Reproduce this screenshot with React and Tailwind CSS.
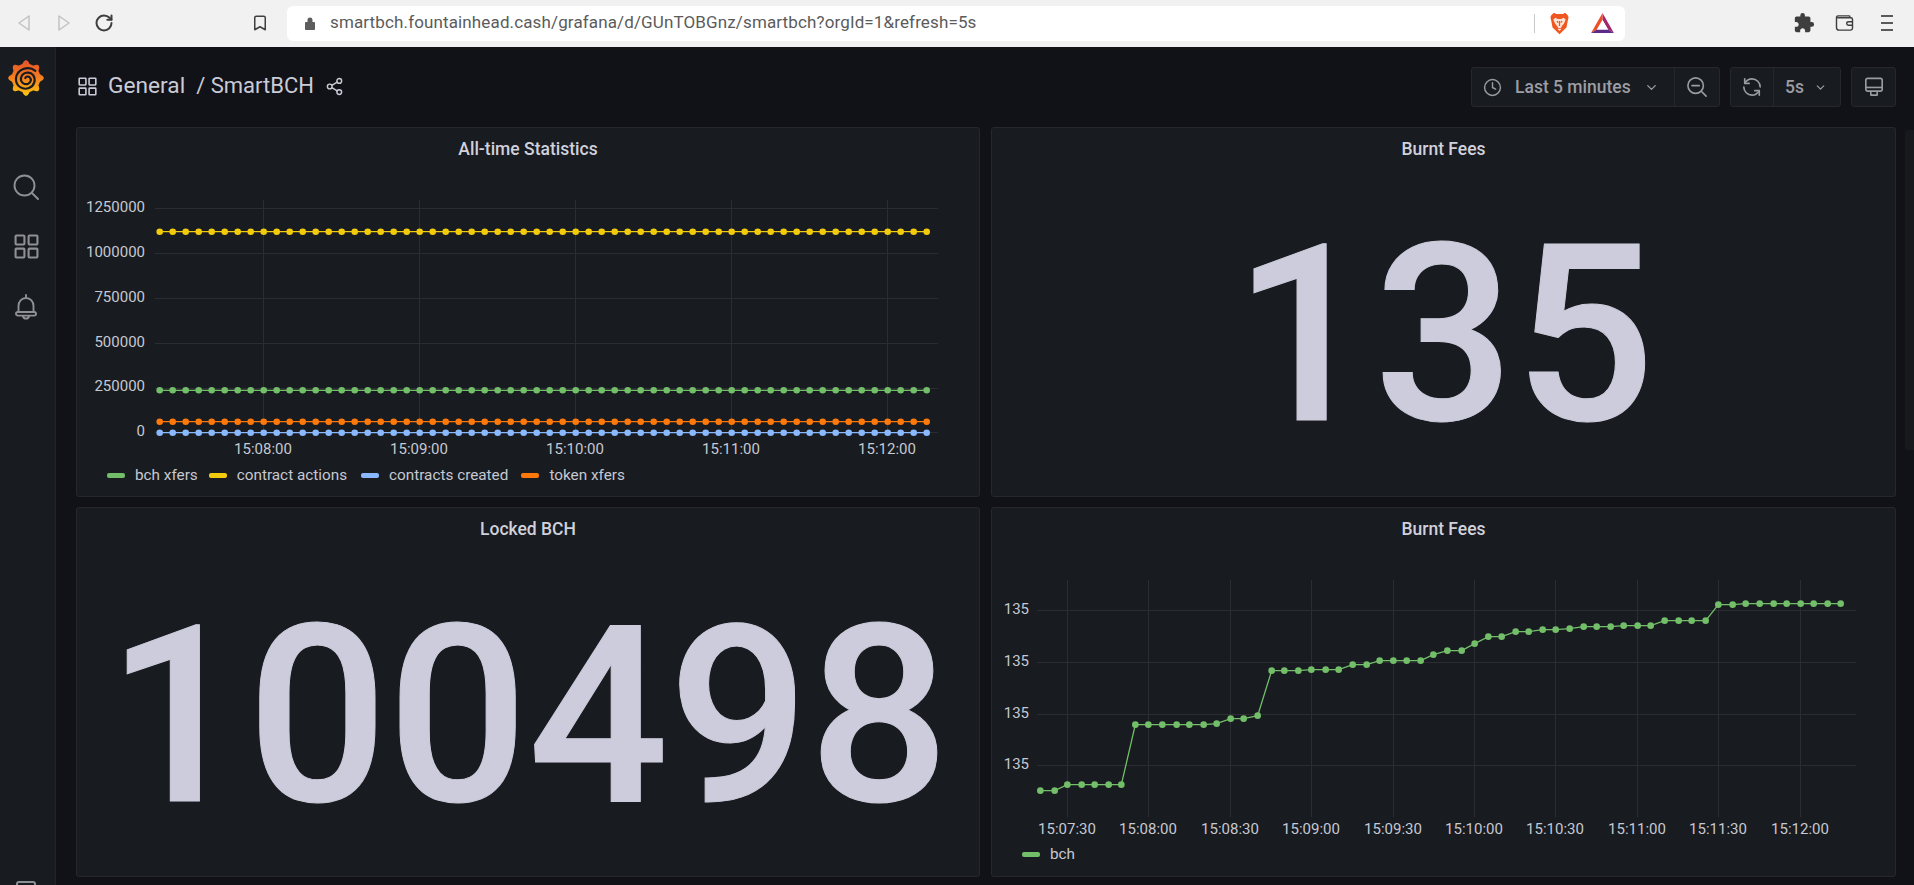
import React from "react";
import { Bookmark, ChevronDown, Clock, RotateCw, Share2 } from "lucide-react";
import { MdExtension } from "react-icons/md";

const range = (n) => Array.from({ length: n }, (_, i) => i);

const AXIS = "#c6c8d2";
const GRID = "#2b2d33";

function Grid4({ className }) {
  return (
    <svg viewBox="0 0 24 24" className={className} fill="none" stroke="currentColor" strokeWidth="2">
      <rect x="1.5" y="1.5" width="8.5" height="8.5" rx="0.8" />
      <rect x="14" y="1.5" width="8.5" height="8.5" rx="0.8" />
      <rect x="1.5" y="14" width="8.5" height="8.5" rx="0.8" />
      <rect x="14" y="14" width="8.5" height="8.5" rx="0.8" />
    </svg>
  );
}

function GrafanaLogo() {
  const cx = 25;
  const cy = 25;
  const teeth = 8;
  let d = "";
  for (let i = 0; i <= 160; i++) {
    const a = (i / 160) * Math.PI * 2 - Math.PI / 2;
    const t = Math.cos(a * teeth);
    const r = 21.5 + 3.2 * Math.max(-0.5, t);
    d += `${i === 0 ? "M" : "L"}${(cx + r * Math.cos(a)).toFixed(2)} ${(cy + r * Math.sin(a)).toFixed(2)}`;
  }
  return (
    <svg viewBox="0 0 50 50" className="h-[36px] w-[36px]">
      <defs>
        <linearGradient id="gf" x1="0" y1="0" x2="0" y2="1">
          <stop offset="0" stopColor="#e8522a" />
          <stop offset="0.45" stopColor="#f27a20" />
          <stop offset="1" stopColor="#fbc611" />
        </linearGradient>
      </defs>
      <path d={d + "Z"} fill="url(#gf)" />
      <path d="M38 15 C28 7 12 13 11 26 C11 37 21 42 29 39 C37 36 39 27 35 21 C30 15 20 17 18 25 C17 31 23 35 28 33 C32 31 33 27 30 24 C28 22 25 23 24 25" fill="none" stroke="#181b1f" strokeWidth="3" strokeLinecap="round" />
    </svg>
  );
}

function BraveLion() {
  return (
    <svg viewBox="0 0 24 28" className="h-[23px] w-[21px]">
      <path d="M5 1 L8 2.5 H16 L19 1 L22.5 4.5 L23 7 L22 11 L20.5 19 L12 27 L3.5 19 L2 11 L1 7 L1.5 4.5 Z" fill="#f0561f" />
      <path d="M7 7 L10 8.5 H14 L17 7 L19.5 9 L17.5 14 L15 17 L13.5 19.5 H10.5 L9 17 L6.5 14 L4.5 9 Z" fill="#fbe3d6" />
      <path d="M9.5 20.5 H14.5 L12 23 Z" fill="#fbe3d6" />
      <path d="M12 11 V17 M9 11 L10.5 13 M15 11 L13.5 13" stroke="#f0561f" strokeWidth="1.5" fill="none" />
    </svg>
  );
}

function BatTriangle() {
  return (
    <svg viewBox="0 0 24 21" className="h-[20px] w-[23px]">
      <path d="M12 0 L24 21 L17.8 17.4 L12 7.4 Z" fill="#a3276f" />
      <path d="M12 0 L12 7.4 L6.2 17.4 L0 21 Z" fill="#ef4f26" />
      <path d="M0 21 L6.2 17.4 H17.8 L24 21 Z" fill="#5c2a86" />
      <path d="M12 7.4 L17.8 17.4 H6.2 Z" fill="#ffffff" />
    </svg>
  );
}

function Wallet() {
  return (
    <svg viewBox="0 0 20 18" className="h-[16px] w-[19px]" fill="none" stroke="#3e3e3e" strokeWidth="1.6">
      <path d="M16 3 V1.8 C16 1.3 15.6 1 15 1 H3 C1.8 1 1 1.9 1 3 V14 C1 15.7 2.2 17 4 17 H17 C18.1 17 19 16.1 19 15 V5 C19 3.9 18.1 3 17 3 H2" />
      <path d="M19 7.5 H14.5 C13.3 7.5 12.5 8.3 12.5 9.5 C12.5 10.7 13.3 11.5 14.5 11.5 H19" />
    </svg>
  );
}

function SearchIcon() {
  return (
    <svg viewBox="0 0 26 26" className="h-[26px] w-[26px]" fill="none" stroke="#8f9096" strokeWidth="1.9" strokeLinecap="round">
      <circle cx="11.5" cy="11.5" r="10" />
      <path d="M19 19 L25 25" />
    </svg>
  );
}

function BellIcon() {
  return (
    <svg viewBox="0 0 22 26" className="h-[26px] w-[22px]" fill="none" stroke="#8f9096" strokeWidth="1.9" strokeLinecap="round">
      <path d="M11 1 V4 M3.5 18 V12 C3.5 7.5 6.5 4 11 4 C15.5 4 18.5 7.5 18.5 12 V18" />
      <rect x="1" y="18" width="20" height="3.6" rx="1.8" />
      <path d="M8 22 C8.5 25.5 13.5 25.5 14 22" />
    </svg>
  );
}

function ZoomOutIcon() {
  return (
    <svg viewBox="0 0 22 22" className="h-[20px] w-[20px]" fill="none" stroke="#9a9ba3" strokeWidth="1.8" strokeLinecap="round">
      <circle cx="9.5" cy="9.5" r="8.5" />
      <path d="M5.5 9.5 H13.5 M16 16 L21 21" />
    </svg>
  );
}

function SyncIcon() {
  return (
    <svg viewBox="0 0 22 22" className="h-[20px] w-[20px]" fill="none" stroke="#9a9ba3" strokeWidth="1.8" strokeLinecap="round" strokeLinejoin="round">
      <path d="M3 7 C5 3.5 8 2 11 2 C16 2 20 6 20 11" />
      <path d="M3 2 V7 H8" />
      <path d="M19 15 C17 18.5 14 20 11 20 C6 20 2 16 2 11" />
      <path d="M19 20 V15 H14" />
    </svg>
  );
}

function MonitorIcon() {
  return (
    <svg viewBox="0 0 22 22" className="h-[20px] w-[20px]" fill="none" stroke="#9a9ba3" strokeWidth="1.8">
      <rect x="2" y="1.5" width="18" height="14" rx="2" />
      <path d="M2 11.5 H20" />
      <path d="M7 20 H15 M7.5 15.5 V20 M14.5 15.5 V20" />
    </svg>
  );
}

function TimeSeries({ x, y, w, h, hLines, vLines, yLabels, xLabels, series, r, lw }) {
  return (
    <svg viewBox={`${x} ${y} ${w} ${h}`} width={w} height={h} className="block shrink-0">
      {hLines.lines.map((v) => (
        <line key={v} x1={hLines.from} x2={hLines.to} y1={v} y2={v} stroke={GRID} strokeWidth="1" />
      ))}
      {vLines.lines.map((v) => (
        <line key={v} x1={v} x2={v} y1={vLines.from} y2={vLines.to} stroke={GRID} strokeWidth="1" />
      ))}
      {yLabels.map((l, i) => (
        <text key={i} x={l.x} y={l.y + 5} textAnchor="end" fontSize="15" fill={AXIS} fontFamily="Roboto, sans-serif">{l.t}</text>
      ))}
      {xLabels.map((l) => (
        <text key={l.t} x={l.x} y={l.y + 5} textAnchor="middle" fontSize="15" fill={AXIS} fontFamily="Roboto, sans-serif">{l.t}</text>
      ))}
      {series.map((s, i) => (
        <g key={i}>
          <polyline points={s.pts.map((p) => p.join(",")).join(" ")} fill="none" stroke={s.color} strokeWidth={lw} />
          {s.pts.map((p, j) => (
            <circle key={j} cx={p[0]} cy={p[1]} r={r} fill={s.color} />
          ))}
        </g>
      ))}
    </svg>
  );
}

function Legend({ items }) {
  return (
    <div className="flex h-[28px] items-center pl-[30px] text-[15.3px] text-[#c6c8d2]">
      {items.map((it) => (
        <div key={it.t} className={`flex items-center ${it.mr}`}>
          <span className={`mr-[10px] h-[5px] w-[18px] rounded-[2px] ${it.bg}`} />
          <span>{it.t}</span>
        </div>
      ))}
    </div>
  );
}

function Panel({ title, children }) {
  return (
    <div className="flex min-h-0 flex-col overflow-hidden rounded-[3px] border border-[#25272d] bg-[#181b1f]">
      <div className="flex h-[41px] shrink-0 items-center justify-center pt-[2px] text-[17.5px] font-medium text-[#d0d1dc]">{title}</div>
      {children}
    </div>
  );
}

function BigStat({ value, size }) {
  return (
    <div className="flex flex-1 items-center justify-center">
      <span className={`font-medium leading-none text-[#ccccdc] [-webkit-text-stroke:1px_#ccccdc] ${size}`}>{value}</span>
    </div>
  );
}

const line = (y, color) => ({
  color,
  pts: range(60).map((i) => [159.7 + i * 13, y]),
});

const zoomA = [[181,872],[224,872],[262,854],[305,854],[344,854],[386,854],[424,854],[466,674],[505,674],[547,674],[590,674],[628,674],[671,674],[710,671],[752,656],[791,656],[833,647],[875,512],[913,512],[955,512],[994,509],[1037,509],[1076,509],[1118,494],[1160,494],[1199,482],[1240,482],[1280,482],[1322,482],[1360,464],[1402,452],[1445,452],[1484,431]];
const zoomB = [[115,410],[155,410],[197,395],[236,395],[278,389],[317,389],[359,386],[401,380],[440,380],[482,380],[521,377],[563,377],[602,377],[644,362],[686,362],[725,362],[767,362],[805,314],[848,314],[887,311],[929,311],[971,311],[1010,311],[1052,311],[1091,311],[1133,311],[1172,311]];
const feesPts = [
  ...zoomA.map(([a, b]) => [980 + a / 3, 500 + b / 3]),
  ...zoomB.map(([a, b]) => [1450 + a / 3, 500 + b / 3]),
];

export default function App() {
  return (
    <div className="relative flex h-[885px] w-[1914px] flex-col overflow-hidden bg-[#111217] font-['Roboto',sans-serif]">
      <div className="flex h-[47px] shrink-0 items-center bg-[#f1f1f1] pb-[1px]">
        <div className="ml-[18px] flex items-center">
          <svg viewBox="0 0 12 16" className="h-[16px] w-[12px]" fill="none" stroke="#c2c2c2" strokeWidth="1.5"><path d="M11 1 L1 8 L11 15 Z" strokeLinejoin="round" /></svg>
          <svg viewBox="0 0 12 16" className="ml-[28px] h-[16px] w-[12px]" fill="none" stroke="#c2c2c2" strokeWidth="1.5"><path d="M1 1 L11 8 L1 15 Z" strokeLinejoin="round" /></svg>
          <RotateCw className="ml-[24px] h-[20px] w-[20px] text-[#3f3f3f]" strokeWidth={2.4} />
          <Bookmark className="ml-[137px] h-[20px] w-[18px] text-[#3f3f3f]" strokeWidth={2} />
        </div>
        <div className="ml-[18px] flex h-[35px] w-[1338px] items-center rounded-[6px] bg-white">
          <svg viewBox="0 0 10 14" className="ml-[18px] h-[14px] w-[10px]" fill="#5d5d5d"><path d="M2.5 6 V4 C2.5 0.7 7.5 0.7 7.5 4 V6 H9 C9.6 6 10 6.4 10 7 V13 C10 13.6 9.6 14 9 14 H1 C0.4 14 0 13.6 0 13 V7 C0 6.4 0.4 6 1 6 Z" /></svg>
          <span className="ml-[15px] flex-1 text-[17px] tracking-[0.13px] text-[#5b5b5b]">smartbch.fountainhead.cash/grafana/d/GUnTOBGnz/smartbch?orgId=1&amp;refresh=5s</span>
          <span className="h-[19px] w-[1px] bg-[#c9c9c9]" />
          <span className="ml-[14px]"><BraveLion /></span>
          <span className="ml-[21px] mr-[11px]"><BatTriangle /></span>
        </div>
        <MdExtension className="ml-[168px] h-[22px] w-[22px] text-[#3e3e3e]" />
        <span className="ml-[20px]"><Wallet /></span>
        <div className="ml-[27px] flex h-[16px] w-[12px] flex-col justify-between">
          <span className="h-[2px] bg-[#5a5a5a]" />
          <span className="h-[2px] bg-[#5a5a5a]" />
          <span className="h-[2px] bg-[#5a5a5a]" />
        </div>
      </div>

      <div className="flex min-h-0 flex-1">
        <div className="flex w-[56px] shrink-0 flex-col items-center border-r border-[#202328] bg-[#181b1f] pr-[3px]">
          <div className="mt-[13px] h-[36px]"><GrafanaLogo /></div>
          <div className="mt-[78px]"><SearchIcon /></div>
          <div className="mt-[34px] text-[#8f9096]"><Grid4 className="h-[25px] w-[25px]" /></div>
          <div className="mt-[35px]"><BellIcon /></div>
          <div className="mt-[561px] h-[16px] w-[20px] shrink-0 rounded-[3px] border-2 border-[#8f9096]" />
        </div>

        <div className="min-w-0 flex-1 pl-[20px]">
          <div className="flex h-[80px] items-start">
            <div className="flex items-center pt-[29px] text-[#c9cbd6]">
              <Grid4 className="ml-[2px] h-[19px] w-[19px]" />
              <span className="ml-[11px] text-[22.7px] leading-[20px]">General</span>
              <span className="ml-[11px] text-[22px] leading-[20px]">/ SmartBCH</span>
              <Share2 className="ml-[11px] h-[19px] w-[19px]" strokeWidth={1.8} />
            </div>
            <div className="ml-auto mr-[18px] mt-[20px] flex h-[40px] items-stretch">
              <div className="flex w-[249px] rounded-[3px] border border-[#25272d] bg-[#181b1f]">
                <div className="flex flex-1 items-center border-r border-[#25272d] pl-[11px]">
                  <Clock className="h-[19px] w-[19px] text-[#9a9ba3]" strokeWidth={1.8} />
                  <span className="ml-[13px] text-[17.5px] font-medium text-[#9c9da5]">Last 5 minutes</span>
                  <ChevronDown className="ml-[13px] h-[15px] w-[15px] text-[#9a9ba3]" strokeWidth={2.2} />
                </div>
                <div className="flex w-[44px] items-center justify-center"><ZoomOutIcon /></div>
              </div>
              <div className="ml-[10px] flex w-[111px] rounded-[3px] border border-[#25272d] bg-[#181b1f]">
                <div className="flex w-[43px] items-center justify-center border-r border-[#25272d]"><SyncIcon /></div>
                <div className="flex flex-1 items-center pl-[11px]">
                  <span className="text-[17.5px] font-medium text-[#9c9da5]">5s</span>
                  <ChevronDown className="ml-[10px] h-[13px] w-[13px] text-[#9a9ba3]" strokeWidth={2.2} />
                </div>
              </div>
              <div className="ml-[10px] flex w-[45px] items-center justify-center rounded-[3px] border border-[#25272d] bg-[#181b1f]"><MonitorIcon /></div>
            </div>
          </div>

          <div className="grid grid-cols-[904px_905px] grid-rows-[370px_370px] gap-x-[11px] gap-y-[10px]">
            <Panel title="All-time Statistics">
              <TimeSeries
                x={77} y={169} w={902} h={292} r={3.3} lw={1.3}
                hLines={{ from: 155, to: 938, lines: [208.5, 253.5, 298.5, 343.5, 388.5, 432.5] }}
                vLines={{ from: 200, to: 432, lines: [263.5, 419.5, 575.5, 731.5, 887.5] }}
                yLabels={[
                  { t: "1250000", x: 145, y: 207 },
                  { t: "1000000", x: 145, y: 252 },
                  { t: "750000", x: 145, y: 297 },
                  { t: "500000", x: 145, y: 342 },
                  { t: "250000", x: 145, y: 386 },
                  { t: "0", x: 145, y: 431 },
                ]}
                xLabels={[
                  { t: "15:08:00", x: 263, y: 449 },
                  { t: "15:09:00", x: 419, y: 449 },
                  { t: "15:10:00", x: 575, y: 449 },
                  { t: "15:11:00", x: 731, y: 449 },
                  { t: "15:12:00", x: 887, y: 449 },
                ]}
                series={[line(390.3, "#73bf69"), line(231.7, "#f2cc0c"), line(421.7, "#ff780a"), line(432.7, "#8ab8ff")]}
              />
              <Legend items={[
                { t: "bch xfers", bg: "bg-[#73bf69]", mr: "mr-[11px]" },
                { t: "contract actions", bg: "bg-[#f2cc0c]", mr: "mr-[14px]" },
                { t: "contracts created", bg: "bg-[#8ab8ff]", mr: "mr-[13px]" },
                { t: "token xfers", bg: "bg-[#ff780a]", mr: "" },
              ]} />
            </Panel>
            <Panel title="Burnt Fees">
              <BigStat value="135" size="text-[247px] mt-[5px] pl-[1px]" />
            </Panel>
            <Panel title="Locked BCH">
              <BigStat value="100498" size="text-[247px] mt-[7px]" />
            </Panel>
            <Panel title="Burnt Fees">
              <TimeSeries
                x={992} y={549} w={903} h={291} r={3.3} lw={1.3}
                hLines={{ from: 1037, to: 1856, lines: [610.5, 662.5, 714.5, 765.5] }}
                vLines={{ from: 580, to: 817, lines: [1067.5, 1148.5, 1230.5, 1311.5, 1393.5, 1474.5, 1555.5, 1637.5, 1718.5, 1800.5] }}
                yLabels={[
                  { t: "135", x: 1029, y: 609 },
                  { t: "135", x: 1029, y: 661 },
                  { t: "135", x: 1029, y: 713 },
                  { t: "135", x: 1029, y: 764 },
                ]}
                xLabels={[
                  { t: "15:07:30", x: 1067, y: 829 },
                  { t: "15:08:00", x: 1148, y: 829 },
                  { t: "15:08:30", x: 1230, y: 829 },
                  { t: "15:09:00", x: 1311, y: 829 },
                  { t: "15:09:30", x: 1393, y: 829 },
                  { t: "15:10:00", x: 1474, y: 829 },
                  { t: "15:10:30", x: 1555, y: 829 },
                  { t: "15:11:00", x: 1637, y: 829 },
                  { t: "15:11:30", x: 1718, y: 829 },
                  { t: "15:12:00", x: 1800, y: 829 },
                ]}
                series={[{ color: "#73bf69", pts: feesPts }]}
              />
              <Legend items={[{ t: "bch", bg: "bg-[#73bf69]", mr: "" }]} />
            </Panel>
          </div>
        </div>
      </div>
      <div className="absolute left-[1905px] top-[130px] h-[320px] w-[9px] rounded-l-[3px] bg-[#18191d]" />
    </div>
  );
}
